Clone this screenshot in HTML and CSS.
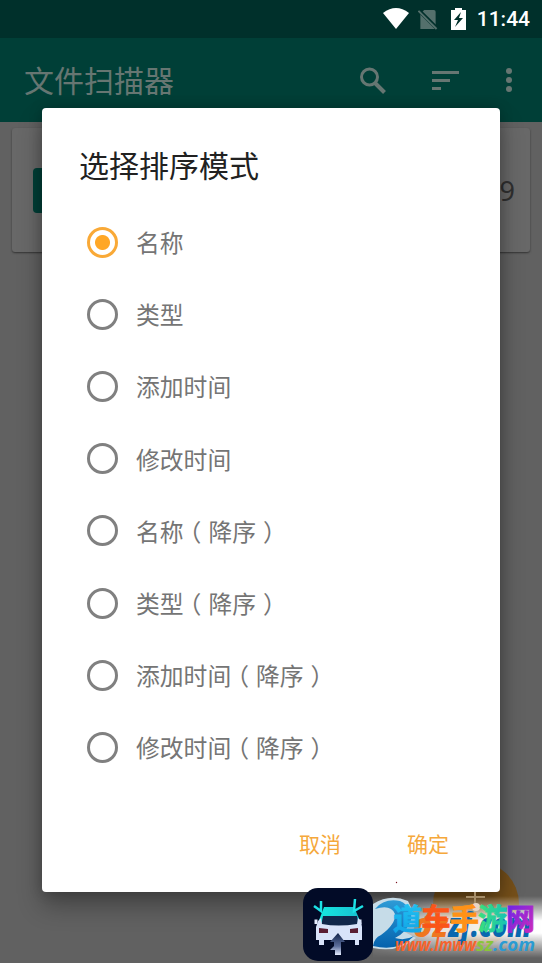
FILE: index.html
```html
<!DOCTYPE html>
<html lang="zh-CN">
<head>
<meta charset="utf-8">
<title>文件扫描器</title>
<link rel="stylesheet" href="styles.css">
</head>
<body>
<div class="screen">
  <header class="status">
    <svg class="wifi" viewBox="0 0 26 22"><path d="M0 5Q13-5 26 5L13 21Z" fill="#fff"/></svg>
    <svg class="sim" viewBox="0 0 20 22"><path d="M6 1h10q2 0 2 2v18H2V5Z" fill="#54706c"/><path d="M0 1l20 20" stroke="#00302b" stroke-width="4"/><path d="M0 2l19 19" stroke="#54706c" stroke-width="2"/></svg>
    <svg class="battery" viewBox="0 0 15 22"><path d="M4 0h7v2h4v20H0V2h4Z" fill="#fff"/><path d="M10 4L3 12h4l-3 7 8-9H8Z" fill="#00302b"/></svg>
    <span>11:44</span>
  </header>
  <nav class="toolbar">
    <h1>文件扫描器</h1>
    <svg class="search" viewBox="0 0 26 27"><circle cx="9.5" cy="10" r="8" fill="none" stroke="#667672" stroke-width="3"/><path d="M15 16l9.5 9.5" stroke="#667672" stroke-width="4"/></svg>
    <svg class="sort" viewBox="0 0 27 19"><path d="M0 0h27v3H0zM0 8h18v3H0zM0 16h9v3H0z" fill="#667672"/></svg>
    <svg class="more" viewBox="0 0 6 24"><g fill="#667672"><circle cx="3" cy="3" r="3"/><circle cx="3" cy="12" r="3"/><circle cx="3" cy="21" r="3"/></g></svg>
  </nav>
  <main class="page">
    <div class="card"><i class="thumb"></i><span>9</span></div>
  </main>
  <div class="fab"></div>
  <section class="dialog">
    <h2>选择排序模式</h2>
    <ul>
      <li><i class="radio on"></i><span>名称</span></li>
      <li><i class="radio"></i><span>类型</span></li>
      <li><i class="radio"></i><span>添加时间</span></li>
      <li><i class="radio"></i><span>修改时间</span></li>
      <li><i class="radio"></i><span>名称<b class="open">（</b>降序<b class="close">）</b></span></li>
      <li><i class="radio"></i><span>类型<b class="open">（</b>降序<b class="close">）</b></span></li>
      <li><i class="radio"></i><span>添加时间<b class="open">（</b>降序<b class="close">）</b></span></li>
      <li><i class="radio"></i><span>修改时间<b class="open">（</b>降序<b class="close">）</b></span></li>
    </ul>
    <div class="actions"><span>取消</span><span>确定</span></div>
  </section>
  <svg class="watermark" viewBox="303 880 239 83">
    <defs>
      <linearGradient id="haze" x2="0" y2="1"><stop offset="0" stop-color="#fff" stop-opacity="0"/><stop offset=".4" stop-color="#fff"/><stop offset=".6" stop-color="#fff"/><stop offset="1" stop-color="#fff" stop-opacity="0"/></linearGradient>
      <linearGradient id="side"><stop offset="0" stop-color="#fff" stop-opacity=".3"/><stop offset=".4" stop-color="#fff" stop-opacity=".85"/><stop offset="1" stop-color="#fff"/></linearGradient>
      <mask id="fade"><rect x="373" y="896" width="169" height="62" fill="url(#side)"/></mask>
      <linearGradient id="blue" x2="0" y2="1"><stop offset="0" stop-color="#2d9bd6"/><stop offset="1" stop-color="#0562ad"/></linearGradient>
      <linearGradient id="way" x2="0" y2="1"><stop offset="0" stop-color="#23c8f5"/><stop offset="1" stop-color="#0fa0e4"/></linearGradient>
      <linearGradient id="swim" x2="1" y2="0"><stop offset="0" stop-color="#3be07a"/><stop offset="1" stop-color="#18c3b4"/></linearGradient>
      <linearGradient id="net" x2="1" y2="1"><stop offset="0" stop-color="#5b23f0"/><stop offset="1" stop-color="#d92bb5"/></linearGradient>
      <linearGradient id="roof"><stop offset="0" stop-color="#16e8e0"/><stop offset="1" stop-color="#17bfd0"/></linearGradient>
      <linearGradient id="arrow" x2="0" y2="1"><stop offset="0" stop-color="#102249"/><stop offset=".6" stop-color="#5d6f9c"/><stop offset="1" stop-color="#e5edff"/></linearGradient>
    </defs>
    <rect x="373" y="896" width="169" height="62" fill="url(#haze)" mask="url(#fade)"/>
    <path d="M466 897h19m-10-5v14" stroke="#a58d68" stroke-width="2"/>
    <circle cx="476" cy="907" r="4" fill="#e6d6c6"/>
    <path d="M373 904Q390 893 408 901L416 918L405 932L416 938Q399 953 373 948Z" fill="#c6dce8"/>
    <path d="M375 909Q384 898 400 901Q413 907 411 920Q407 932 395 938Q405 941 414 936Q399 952 373 946Q374 938 381 935Q396 924 395 914Q391 904 375 909Z" fill="url(#blue)"/>
    <g class="under"><text x="413" y="937" textLength="35" lengthAdjust="spacingAndGlyphs" fill="#ef761f">oz</text><text x="448" y="937" textLength="83" lengthAdjust="spacingAndGlyphs" fill="#0868af">zf.com</text></g>
    <g class="brand"><text x="393" y="930" fill="url(#way)" stroke="url(#way)">道</text><text x="421.500" y="930" fill="#fa5519" stroke="#fa5519">车</text><text x="450" y="930" fill="#ff9217" stroke="#ff9217">手</text><text x="478" y="930" fill="url(#swim)" stroke="url(#swim)">游</text><text x="506" y="930" fill="url(#net)" stroke="url(#net)">网</text></g>
    <g class="url"><text x="395" y="951" textLength="81" lengthAdjust="spacingAndGlyphs" fill="#f7632d">www.lmww</text><text x="476" y="951" textLength="17" lengthAdjust="spacingAndGlyphs" fill="#8ac43b">sz</text><text x="493" y="951" textLength="42" lengthAdjust="spacingAndGlyphs" fill="#299bd3">.com</text></g>
    <circle cx="396.500" cy="882.500" r=".7" fill="#7a1420"/>
    <rect x="303" y="888" width="70" height="73" rx="15" fill="#020b27"/>
    <path d="M324 907h30l7 16h-43z" fill="url(#roof)"/>
    <path d="M323 916h34l2 10h-38z" fill="#10264a"/>
    <path d="M314.500 919.500h3v4.500h-3zm44 0h3v4.500h-3z" fill="#e5edff"/>
    <path d="M318 921l3-3 1 6q16 3 35 0l1-6 3 3 1 6v13h-3v5h-4v-5h-31v5h-5v-5h-3v-13z" fill="#d8e3fa"/>
    <path d="M319 928l9 1v4h-9zm31 1 8-1v5h-8z" fill="#591d34"/>
    <path d="M338 933l7 9h-4v13h-6v-5h-5l4-4v-4h-4z" fill="url(#arrow)"/>
    <path d="M314 906l7 5v-10M363 906l-9 5 1-12" fill="none" stroke="#1ce2e6" stroke-width="2.5"/>
  </svg>
</div>
</body>
</html>
```
FILE: styles.css
```css
* { box-sizing: border-box; }
body { margin: 0; font-family: "Noto Sans CJK SC", sans-serif; }
.screen { position: relative; width: 542px; height: 963px; overflow: hidden; background: #616161; }
.status { height: 38px; background: #00302b; display: flex; align-items: center; padding: 0 12px 0 383px; color: #fff; font: 500 21px Roboto, sans-serif; }
.status span { margin-left: auto; line-height: 38px; }
.wifi { width: 26px; height: 22px; }
.sim { width: 20px; height: 21px; margin-left: 9px; }
.battery { width: 15px; height: 22px; margin-left: 13px; }
.toolbar { height: 84px; background: #003f37; display: flex; align-items: center; padding: 0 30px 0 24px; color: #667672; }
.toolbar h1 { font-size: 30px; font-weight: 400; line-height: 40px; margin: 0; padding-bottom: 3px; width: 336px; }
.search { width: 26px; height: 27px; }
.sort { width: 27px; height: 19px; margin-left: 46px; }
.more { width: 6px; height: 24px; margin-left: 47px; }
.page { padding: 6px 12px; }
.card { height: 124px; border-radius: 3px; background: #686868; box-shadow: 0 1px 2px #333; display: flex; align-items: center; justify-content: space-between; padding: 0 15px 0 21px; font: 27px "Noto Sans", sans-serif; color: #303030; }
.thumb { width: 45px; height: 45px; border-radius: 4px; background: #003f37; }
.fab { position: absolute; left: 433px; top: 861px; width: 86px; height: 86px; border-radius: 50%; background: #76501a; }
.dialog { position: absolute; left: 42px; top: 108px; width: 458px; height: 784px; border-radius: 4px; background: #fff; box-shadow: 0 14px 24px rgba(0,0,0,.3), 0 0 14px rgba(0,0,0,.2); padding: 35px 37px 0; }
.dialog h2 { margin: 0; font-size: 30px; font-weight: 400; line-height: 42px; color: #212121; }
.dialog ul { margin: 21px 0 0; padding: 0 0 0 8px; list-style: none; }
.dialog li { display: flex; align-items: center; height: 72.2px; font-size: 23.8px; color: #757575; }
.dialog li span { padding-bottom: 1px; }
.dialog b { font-weight: 400; }
.open { margin: 0 7px 0 -6px; }
.close { margin-left: 7px; }
.radio { width: 31px; height: 31px; margin-right: 18px; border: 3px solid #808080; border-radius: 50%; }
.radio.on { border-color: #f9a937; background: radial-gradient(circle, #ffa726 7px, #fff 8px); }
.actions { display: flex; justify-content: flex-end; gap: 66px; margin-top: 44px; padding-right: 14px; font-size: 21px; line-height: 30px; color: #f5a83b; }
.watermark { position: absolute; left: 303px; top: 880px; width: 239px; height: 83px; }
.under { font: italic 800 34px "Open Sans", sans-serif; }
.brand { font: 700 29px "Noto Sans CJK SC", sans-serif; stroke-width: .8px; }
.url { font: italic 700 18px "Open Sans", sans-serif; }
```
